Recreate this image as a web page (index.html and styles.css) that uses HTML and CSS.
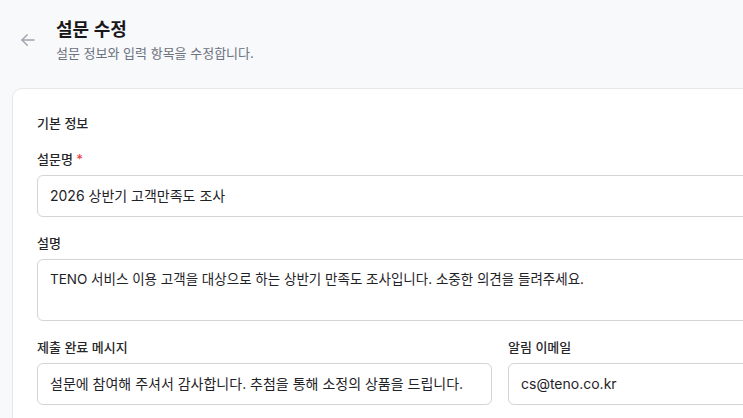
FILE: index.html
```html
<!DOCTYPE html>
<html lang="ko">
<head>
<meta charset="utf-8">
<title>설문 수정</title>
<link rel="stylesheet" href="styles.css">
</head>
<body>
<div class="page">
  <header class="page-header">
    <button class="back-btn" type="button" aria-label="뒤로">
      <svg width="18" height="18" viewBox="0 0 24 24" fill="none" stroke="currentColor" stroke-width="1.8" stroke-linecap="round" stroke-linejoin="round"><path d="M20 12H4"/><path d="M11 19l-7-7 7-7"/></svg>
    </button>
    <div class="titles">
      <h1 class="title">설문 수정</h1>
      <p class="subtitle">설문 정보와 입력 항목을 수정합니다.</p>
    </div>
  </header>

  <section class="card">
    <h2 class="section-title">기본 정보</h2>

    <div class="field">
      <label class="label">설문명 <span class="req">*</span></label>
      <div class="input">2026 상반기 고객만족도 조사</div>
    </div>

    <div class="field">
      <label class="label">설명</label>
      <div class="input textarea">TENO 서비스 이용 고객을 대상으로 하는 상반기 만족도 조사입니다. 소중한 의견을 들려주세요.</div>
    </div>

    <div class="row">
      <div class="field">
        <label class="label">제출 완료 메시지</label>
        <div class="input">설문에 참여해 주셔서 감사합니다. 추첨을 통해 소정의 상품을 드립니다.</div>
      </div>
      <div class="field">
        <label class="label">알림 이메일</label>
        <div class="input">cs@teno.co.kr</div>
      </div>
    </div>
  </section>
</div>
</body>
</html>
```

FILE: styles.css
```css
html, body {
  margin: 0;
  padding: 0;
  overflow: hidden;
  background: #f8f9fa;
}
body {
  font-family: "Inter", "Noto Sans CJK KR", "Noto Sans", sans-serif;
  color: #1f2328;
}
.page {
  width: 1000px;
  box-sizing: border-box;
  padding: 17px 12px 0 12px;
}
.page-header {
  display: flex;
  align-items: center;
  gap: 12px;
  margin-bottom: 25px;
}
.back-btn {
  width: 32px;
  height: 32px;
  border: 0;
  background: transparent;
  color: #9ca3af;
  display: flex;
  align-items: center;
  justify-content: center;
  padding: 0;
}
.titles {
  display: flex;
  flex-direction: column;
}
.title {
  margin: 0;
  font-size: 18px;
  line-height: 26px;
  font-weight: 600;
  color: #18181b;
}
.subtitle {
  margin: 0;
  font-size: 13px;
  line-height: 20px;
  color: #6b7280;
}
.card {
  background: #fff;
  border: 1px solid #e5e7eb;
  border-radius: 10px;
  padding: 24px;
  display: flex;
  flex-direction: column;
  gap: 16px;
}
.section-title {
  margin: 0;
  font-size: 13px;
  line-height: 20px;
  font-weight: 500;
  color: #27272a;
}
.field {
  display: flex;
  flex-direction: column;
  gap: 6px;
}
.label {
  font-size: 13px;
  line-height: 20px;
  font-weight: 500;
  color: #27272a;
}
.req {
  color: #ef4444;
}
.input {
  box-sizing: border-box;
  height: 42px;
  border: 1px solid #d4d4d8;
  border-radius: 6px;
  padding: 10px 12px;
  font-size: 14px;
  line-height: 20px;
  color: #1f2328;
  background: #fff;
  white-space: nowrap;
  overflow: hidden;
}
.textarea {
  height: 62px;
  padding-top: 9px;
  font-size: 13.5px;
}
.row {
  display: grid;
  grid-template-columns: 1fr 1fr;
  gap: 16px;
}
```
